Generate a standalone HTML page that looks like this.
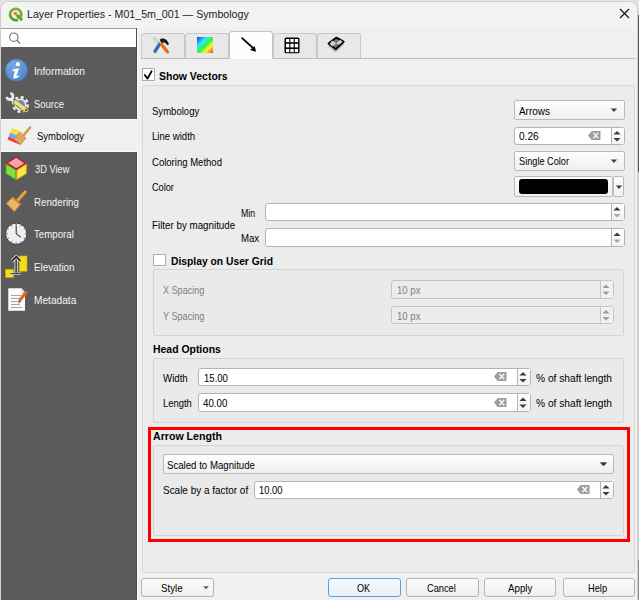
<!DOCTYPE html>
<html><head><meta charset="utf-8"><style>
*{margin:0;padding:0;box-sizing:border-box}
html,body{width:639px;height:600px;overflow:hidden;background:#e4e4e4}
body{position:relative;font-family:"Liberation Sans",sans-serif;font-size:10px;color:#000}
.a{position:absolute}
.t{position:absolute;white-space:nowrap;line-height:1}
</style></head><body>
<div class="a" style="left:638px;top:15px;width:1px;height:157px;background:#4a5866"></div>
<div class="a" style="left:638px;top:172px;width:1px;height:388px;background:#cdcdcd"></div>
<div class="a" style="left:638px;top:560px;width:1px;height:40px;background:#8a8a8a"></div>
<div class="a" style="left:0px;top:1px;width:638px;height:599px;background:#f0f0f0;border:1px solid #cfcfcf;border-bottom:none;border-radius:8px 8px 0 0"></div>
<div class="a" style="left:1px;top:2px;width:636px;height:26px;background:#f3f3f3;border-radius:7px 7px 0 0"></div>
<svg class="a" style="left:6px;top:4px" width="20" height="20" viewBox="0 0 20 20">
  <defs><linearGradient id="qg" x1="0" y1="0" x2="0" y2="1"><stop offset="0" stop-color="#80b62c"/><stop offset="1" stop-color="#5a9c22"/></linearGradient></defs>
  <path d="M11.8 15.6 A5.6 5.6 0 1 1 14.8 12.6" fill="none" stroke="url(#qg)" stroke-width="2.8"/>
  <path d="M11.6 11.8 L15.2 15.2" stroke="#5fa323" stroke-width="3" stroke-linecap="round"/>
  <circle cx="9.4" cy="9.6" r="1.8" fill="#f07a26"/>
</svg>
<div class="t" style="left:27.00px;top:9.29px;font-size:11px;color:#1b1b1b;transform:scaleX(0.9673);transform-origin:0 0;">Layer Properties - M01_5m_001 — Symbology</div>
<svg class="a" style="left:619px;top:8px" width="11" height="11" viewBox="0 0 11 11"><path d="M1 1L10 10M10 1L1 10" stroke="#1a1a1a" stroke-width="1.25"/></svg>
<div class="a" style="left:1px;top:28px;width:136px;height:19px;background:#fff;border-top:1px solid #9c9c9c"></div>
<svg class="a" style="left:8px;top:31px" width="14" height="14" viewBox="0 0 14 14"><circle cx="5.8" cy="6.2" r="4.2" fill="none" stroke="#707070" stroke-width="1.1"/><path d="M8.8 9.2L12.2 12.6" stroke="#707070" stroke-width="1.3"/></svg>
<div class="a" style="left:1px;top:47px;width:136px;height:553px;background:#5b5b5b"></div>
<div class="a" style="left:136px;top:28px;width:1px;height:572px;background:#4c4c4c"></div>
<div class="a" style="left:137px;top:28px;width:1px;height:572px;background:#fbfbfb"></div>
<div class="a" style="left:1px;top:119px;width:137px;height:33px;background:#f0f0f0;border-top:1px solid #fafafa;border-bottom:1px solid #fafafa"></div>
<div class="t" style="left:34.00px;top:65.86px;font-size:10.8px;color:#f4f4f4;transform:scaleX(0.9444);transform-origin:0 0;">Information</div>
<div class="t" style="left:34.00px;top:98.86px;font-size:10.8px;color:#f4f4f4;transform:scaleX(0.8763);transform-origin:0 0;">Source</div>
<div class="t" style="left:36.60px;top:130.86px;font-size:10.8px;color:#000;transform:scaleX(0.8792);transform-origin:0 0;">Symbology</div>
<div class="t" style="left:34.60px;top:163.86px;font-size:10.8px;color:#f4f4f4;transform:scaleX(0.8585);transform-origin:0 0;">3D View</div>
<div class="t" style="left:33.50px;top:196.86px;font-size:10.8px;color:#f4f4f4;transform:scaleX(0.9018);transform-origin:0 0;">Rendering</div>
<div class="t" style="left:34.20px;top:229.36px;font-size:10.8px;color:#f4f4f4;transform:scaleX(0.8966);transform-origin:0 0;">Temporal</div>
<div class="t" style="left:33.50px;top:261.96px;font-size:10.8px;color:#f4f4f4;transform:scaleX(0.9124);transform-origin:0 0;">Elevation</div>
<div class="t" style="left:33.50px;top:294.86px;font-size:10.8px;color:#f4f4f4;transform:scaleX(0.9392);transform-origin:0 0;">Metadata</div>
<div class="a" style="left:141px;top:58px;width:494px;height:1px;background:#bcbcbc"></div>
<div class="a" style="left:141px;top:33px;width:44px;height:25px;background:#e8e8e8;border:1px solid #c8c8c8;border-bottom:none;border-radius:3px 3px 0 0"></div>
<div class="a" style="left:185px;top:33px;width:44px;height:25px;background:#e8e8e8;border:1px solid #c8c8c8;border-bottom:none;border-radius:3px 3px 0 0"></div>
<div class="a" style="left:229px;top:31px;width:44px;height:28px;background:#fefefe;border:1px solid #c4c4c4;border-bottom:none;border-radius:3px 3px 0 0"></div>
<div class="a" style="left:273px;top:33px;width:44px;height:25px;background:#e8e8e8;border:1px solid #c8c8c8;border-bottom:none;border-radius:3px 3px 0 0"></div>
<div class="a" style="left:317px;top:33px;width:44px;height:25px;background:#e8e8e8;border:1px solid #c8c8c8;border-bottom:none;border-radius:3px 3px 0 0"></div>
<div class="a" style="left:142px;top:68px;width:13px;height:13px;background:#fff;border:1px solid #adadad"></div>
<svg class="a" style="left:142px;top:68px" width="13" height="13" viewBox="0 0 13 13"><path d="M2.8 7 L5.5 10.6 L9.6 3.2" fill="none" stroke="#000" stroke-width="1.8" stroke-linecap="round" stroke-linejoin="round"/></svg>
<div class="t" style="left:159.30px;top:70.99px;font-size:11px;color:#000;font-weight:bold;transform:scaleX(0.9521);transform-origin:0 0;">Show Vectors</div>
<div class="a" style="left:142px;top:85px;width:493px;height:488px;background:#ececec;border:1px solid #d7d7d7;border-radius:2px"></div>
<div class="t" style="left:151.60px;top:105.63px;font-size:10.6px;color:#000;transform:scaleX(0.9015);transform-origin:0 0;">Symbology</div>
<div class="a" style="left:514px;top:100px;width:111px;height:20px;background:linear-gradient(#fdfdfd,#f0f0f0);border:1px solid #bababa;border-radius:2px"></div>
<svg class="a" style="left:610px;top:107.5px" width="8" height="5" viewBox="0 0 8 5"><path d="M0.9 0.6 L7.1 0.6 L4 3.9 Z" fill="#3c3c3c"/></svg>
<div class="t" style="left:518.50px;top:105.53px;font-size:10.6px;color:#000;transform:scaleX(0.9373);transform-origin:0 0;">Arrows</div>
<div class="t" style="left:151.60px;top:131.03px;font-size:10.6px;color:#000;transform:scaleX(0.9057);transform-origin:0 0;">Line width</div>
<div class="a" style="left:514px;top:127px;width:111px;height:18px;background:#ffffff;border:1px solid #b4b4b4;border-radius:3px"></div>
<div class="a" style="left:612px;top:128px;width:12px;height:16px;background:linear-gradient(#fefefe,#f4f4f4)"></div>
<div class="a" style="left:611px;top:128px;width:1px;height:16px;background:#b4b4b4"></div>
<svg class="a" style="left:613.2px;top:127px" width="8" height="18" viewBox="0 0 8 18"><path d="M0.4 7.4 L4 4.1000000000000005 L7.6 7.4 Z" fill="#3c3c3c"/><path d="M0.4 11.100000000000001 L4 14.4 L7.6 11.100000000000001 Z" fill="#3c3c3c"/></svg>
<svg class="a" style="left:588px;top:131.0px" width="13" height="9" viewBox="0 0 13 9"><path d="M0 4.5 L3.6 0 L12.5 0 L12.5 9 L3.6 9 Z" fill="#9e9e9e"/><path d="M5.4 1.8 L10.2 7.2 M10.2 1.8 L5.4 7.2" stroke="#f6f6f6" stroke-width="1.4"/></svg>
<div class="t" style="left:518.50px;top:130.73px;font-size:10.6px;color:#000;transform:scaleX(0.9531);transform-origin:0 0;">0.26</div>
<div class="t" style="left:151.60px;top:156.63px;font-size:10.6px;color:#000;transform:scaleX(0.8997);transform-origin:0 0;">Coloring Method</div>
<div class="a" style="left:514px;top:151px;width:111px;height:20px;background:linear-gradient(#fdfdfd,#f0f0f0);border:1px solid #bababa;border-radius:2px"></div>
<svg class="a" style="left:610px;top:158.5px" width="8" height="5" viewBox="0 0 8 5"><path d="M0.9 0.6 L7.1 0.6 L4 3.9 Z" fill="#3c3c3c"/></svg>
<div class="t" style="left:518.50px;top:156.23px;font-size:10.6px;color:#000;transform:scaleX(0.8672);transform-origin:0 0;">Single Color</div>
<div class="t" style="left:151.60px;top:182.33px;font-size:10.6px;color:#000;transform:scaleX(0.8645);transform-origin:0 0;">Color</div>
<div class="a" style="left:514px;top:176px;width:99px;height:21px;background:linear-gradient(#fdfdfd,#f0f0f0);border:1px solid #bababa;border-radius:2px"></div>
<div class="a" style="left:519px;top:179px;width:89px;height:15px;background:#000;border-radius:3px"></div>
<div class="a" style="left:613px;top:176px;width:11px;height:21px;background:linear-gradient(#fdfdfd,#f0f0f0);border:1px solid #bababa;border-radius:2px"></div>
<svg class="a" style="left:614.5px;top:184.5px" width="8" height="5" viewBox="0 0 8 5"><path d="M0.9 0.6 L7.1 0.6 L4 3.9 Z" fill="#3c3c3c"/></svg>
<div class="t" style="left:151.60px;top:220.23px;font-size:10.6px;color:#000;transform:scaleX(0.9234);transform-origin:0 0;">Filter by magnitude</div>
<div class="t" style="left:240.80px;top:207.63px;font-size:10.6px;color:#000;transform:scaleX(0.8262);transform-origin:0 0;">Min</div>
<div class="t" style="left:240.80px;top:233.03px;font-size:10.6px;color:#000;transform:scaleX(0.9085);transform-origin:0 0;">Max</div>
<div class="a" style="left:265px;top:203px;width:360px;height:18px;background:#ffffff;border:1px solid #b4b4b4;border-radius:3px"></div>
<div class="a" style="left:612px;top:204px;width:12px;height:16px;background:linear-gradient(#fefefe,#f4f4f4)"></div>
<div class="a" style="left:611px;top:204px;width:1px;height:16px;background:#b4b4b4"></div>
<svg class="a" style="left:613.2px;top:203px" width="8" height="18" viewBox="0 0 8 18"><path d="M0.4 7.4 L4 4.1000000000000005 L7.6 7.4 Z" fill="#3c3c3c"/><path d="M0.4 11.100000000000001 L4 14.4 L7.6 11.100000000000001 Z" fill="#a8a8a8"/></svg>
<div class="a" style="left:265px;top:228px;width:360px;height:19px;background:#ffffff;border:1px solid #b4b4b4;border-radius:3px"></div>
<div class="a" style="left:612px;top:229px;width:12px;height:17px;background:linear-gradient(#fefefe,#f4f4f4)"></div>
<div class="a" style="left:611px;top:229px;width:1px;height:17px;background:#b4b4b4"></div>
<svg class="a" style="left:613.2px;top:228px" width="8" height="19" viewBox="0 0 8 19"><path d="M0.4 7.9 L4 4.6000000000000005 L7.6 7.9 Z" fill="#3c3c3c"/><path d="M0.4 11.600000000000001 L4 14.9 L7.6 11.600000000000001 Z" fill="#a8a8a8"/></svg>
<div class="a" style="left:153px;top:254px;width:13px;height:12px;background:#fff;border:1px solid #adadad"></div>
<div class="t" style="left:170.80px;top:255.59px;font-size:11px;color:#000;font-weight:bold;transform:scaleX(0.9367);transform-origin:0 0;">Display on User Grid</div>
<div class="a" style="left:153px;top:269px;width:471px;height:67px;background:#eaeaea;border:1px solid #d5d5d5;border-radius:2px"></div>
<div class="t" style="left:162.70px;top:284.83px;font-size:10.6px;color:#7e7e7e;transform:scaleX(0.8565);transform-origin:0 0;">X Spacing</div>
<div class="t" style="left:162.70px;top:310.73px;font-size:10.6px;color:#7e7e7e;transform:scaleX(0.8603);transform-origin:0 0;">Y Spacing</div>
<div class="a" style="left:391px;top:280px;width:223px;height:19px;background:#ececec;border:1px solid #c4c4c4;border-radius:3px"></div>
<div class="a" style="left:601px;top:281px;width:12px;height:17px;background:#f1f1f1"></div>
<div class="a" style="left:600px;top:281px;width:1px;height:17px;background:#c4c4c4"></div>
<svg class="a" style="left:602.2px;top:280px" width="8" height="19" viewBox="0 0 8 19"><path d="M0.4 7.9 L4 4.6000000000000005 L7.6 7.9 Z" fill="#9c9c9c"/><path d="M0.4 11.600000000000001 L4 14.9 L7.6 11.600000000000001 Z" fill="#9c9c9c"/></svg>
<div class="a" style="left:391px;top:306px;width:223px;height:18px;background:#ececec;border:1px solid #c4c4c4;border-radius:3px"></div>
<div class="a" style="left:601px;top:307px;width:12px;height:16px;background:#f1f1f1"></div>
<div class="a" style="left:600px;top:307px;width:1px;height:16px;background:#c4c4c4"></div>
<svg class="a" style="left:602.2px;top:306px" width="8" height="18" viewBox="0 0 8 18"><path d="M0.4 7.4 L4 4.1000000000000005 L7.6 7.4 Z" fill="#9c9c9c"/><path d="M0.4 11.100000000000001 L4 14.4 L7.6 11.100000000000001 Z" fill="#9c9c9c"/></svg>
<div class="t" style="left:396.50px;top:285.03px;font-size:10.6px;color:#7e7e7e;transform:scaleX(0.9049);transform-origin:0 0;">10 px</div>
<div class="t" style="left:396.50px;top:310.53px;font-size:10.6px;color:#7e7e7e;transform:scaleX(0.9049);transform-origin:0 0;">10 px</div>
<div class="t" style="left:153.10px;top:344.19px;font-size:11px;color:#000;font-weight:bold;transform:scaleX(0.9483);transform-origin:0 0;">Head Options</div>
<div class="a" style="left:153px;top:358px;width:471px;height:65px;background:#eaeaea;border:1px solid #d5d5d5;border-radius:2px"></div>
<div class="t" style="left:162.80px;top:372.53px;font-size:10.6px;color:#000;transform:scaleX(0.9139);transform-origin:0 0;">Width</div>
<div class="t" style="left:162.80px;top:397.73px;font-size:10.6px;color:#000;transform:scaleX(0.8910);transform-origin:0 0;">Length</div>
<div class="a" style="left:198px;top:368px;width:333px;height:18px;background:#ffffff;border:1px solid #b4b4b4;border-radius:3px"></div>
<div class="a" style="left:518px;top:369px;width:12px;height:16px;background:linear-gradient(#fefefe,#f4f4f4)"></div>
<div class="a" style="left:517px;top:369px;width:1px;height:16px;background:#b4b4b4"></div>
<svg class="a" style="left:519.2px;top:368px" width="8" height="18" viewBox="0 0 8 18"><path d="M0.4 7.4 L4 4.1000000000000005 L7.6 7.4 Z" fill="#3c3c3c"/><path d="M0.4 11.100000000000001 L4 14.4 L7.6 11.100000000000001 Z" fill="#3c3c3c"/></svg>
<svg class="a" style="left:494px;top:372.0px" width="13" height="9" viewBox="0 0 13 9"><path d="M0 4.5 L3.6 0 L12.5 0 L12.5 9 L3.6 9 Z" fill="#9e9e9e"/><path d="M5.4 1.8 L10.2 7.2 M10.2 1.8 L5.4 7.2" stroke="#f6f6f6" stroke-width="1.4"/></svg>
<div class="a" style="left:198px;top:393px;width:333px;height:19px;background:#ffffff;border:1px solid #b4b4b4;border-radius:3px"></div>
<div class="a" style="left:518px;top:394px;width:12px;height:17px;background:linear-gradient(#fefefe,#f4f4f4)"></div>
<div class="a" style="left:517px;top:394px;width:1px;height:17px;background:#b4b4b4"></div>
<svg class="a" style="left:519.2px;top:393px" width="8" height="19" viewBox="0 0 8 19"><path d="M0.4 7.9 L4 4.6000000000000005 L7.6 7.9 Z" fill="#3c3c3c"/><path d="M0.4 11.600000000000001 L4 14.9 L7.6 11.600000000000001 Z" fill="#3c3c3c"/></svg>
<svg class="a" style="left:494px;top:397.5px" width="13" height="9" viewBox="0 0 13 9"><path d="M0 4.5 L3.6 0 L12.5 0 L12.5 9 L3.6 9 Z" fill="#9e9e9e"/><path d="M5.4 1.8 L10.2 7.2 M10.2 1.8 L5.4 7.2" stroke="#f6f6f6" stroke-width="1.4"/></svg>
<div class="t" style="left:203.50px;top:372.53px;font-size:10.6px;color:#000;transform:scaleX(0.9019);transform-origin:0 0;">15.00</div>
<div class="t" style="left:203.10px;top:397.73px;font-size:10.6px;color:#000;transform:scaleX(0.9170);transform-origin:0 0;">40.00</div>
<div class="t" style="left:536.30px;top:372.63px;font-size:10.6px;color:#000;transform:scaleX(0.9624);transform-origin:0 0;">% of shaft length</div>
<div class="t" style="left:536.30px;top:397.83px;font-size:10.6px;color:#000;transform:scaleX(0.9624);transform-origin:0 0;">% of shaft length</div>
<div class="t" style="left:153.10px;top:431.29px;font-size:11px;color:#000;font-weight:bold;transform:scaleX(0.9636);transform-origin:0 0;">Arrow Length</div>
<div class="a" style="left:153px;top:445px;width:471px;height:91px;background:#eaeaea;border:1px solid #d5d5d5;border-radius:2px"></div>
<div class="a" style="left:163px;top:454px;width:451px;height:20px;background:linear-gradient(#fdfdfd,#f0f0f0);border:1px solid #bababa;border-radius:2px"></div>
<svg class="a" style="left:599px;top:461.5px" width="8" height="5" viewBox="0 0 8 5"><path d="M0.9 0.6 L7.1 0.6 L4 3.9 Z" fill="#3c3c3c"/></svg>
<div class="t" style="left:166.90px;top:459.63px;font-size:10.6px;color:#000;transform:scaleX(0.9103);transform-origin:0 0;">Scaled to Magnitude</div>
<svg class="a" style="left:599.5px;top:462.0px" width="8" height="5" viewBox="0 0 8 5"><path d="M0.9 0.6 L7.1 0.6 L4 3.9 Z" fill="#3c3c3c"/></svg>
<div class="t" style="left:162.90px;top:485.43px;font-size:10.6px;color:#000;transform:scaleX(0.9390);transform-origin:0 0;">Scale by a factor of</div>
<div class="a" style="left:254px;top:481px;width:360px;height:18px;background:#ffffff;border:1px solid #b4b4b4;border-radius:3px"></div>
<div class="a" style="left:601px;top:482px;width:12px;height:16px;background:linear-gradient(#fefefe,#f4f4f4)"></div>
<div class="a" style="left:600px;top:482px;width:1px;height:16px;background:#b4b4b4"></div>
<svg class="a" style="left:602.2px;top:481px" width="8" height="18" viewBox="0 0 8 18"><path d="M0.4 7.4 L4 4.1000000000000005 L7.6 7.4 Z" fill="#3c3c3c"/><path d="M0.4 11.100000000000001 L4 14.4 L7.6 11.100000000000001 Z" fill="#3c3c3c"/></svg>
<svg class="a" style="left:577px;top:485.0px" width="13" height="9" viewBox="0 0 13 9"><path d="M0 4.5 L3.6 0 L12.5 0 L12.5 9 L3.6 9 Z" fill="#9e9e9e"/><path d="M5.4 1.8 L10.2 7.2 M10.2 1.8 L5.4 7.2" stroke="#f6f6f6" stroke-width="1.4"/></svg>
<div class="t" style="left:259.20px;top:485.43px;font-size:10.6px;color:#000;transform:scaleX(0.8830);transform-origin:0 0;">10.00</div>
<div class="a" style="left:148px;top:427px;width:482px;height:115px;border:3px solid #ff0000"></div>
<div class="a" style="left:141px;top:578px;width:73px;height:19px;background:linear-gradient(#fcfcfc,#eeeeee);border:1px solid #b4b4b4;border-radius:3px"></div>
<div class="t" style="left:160.60px;top:582.83px;font-size:10.6px;color:#000;transform:scaleX(0.9179);transform-origin:0 0;">Style</div>
<svg class="a" style="left:203.4px;top:585.6px" width="6" height="4" viewBox="0 0 6 4"><path d="M0.2 0.3 L5.8 0.3 L3 3.3 Z" fill="#5a5a5a"/></svg>
<div class="a" style="left:328px;top:578px;width:73px;height:19px;background:linear-gradient(#f5f9fd,#e9f1f9);border:1px solid #56a0e4;border-radius:3px"></div>
<div class="a" style="left:406px;top:578px;width:73px;height:19px;background:linear-gradient(#fcfcfc,#eeeeee);border:1px solid #b4b4b4;border-radius:3px"></div>
<div class="a" style="left:484px;top:578px;width:72px;height:19px;background:linear-gradient(#fcfcfc,#eeeeee);border:1px solid #b4b4b4;border-radius:3px"></div>
<div class="a" style="left:563px;top:578px;width:72px;height:19px;background:linear-gradient(#fcfcfc,#eeeeee);border:1px solid #b4b4b4;border-radius:3px"></div>
<div class="t" style="left:357.30px;top:583.03px;font-size:10.6px;color:#000;transform:scaleX(0.8582);transform-origin:0 0;">OK</div>
<div class="t" style="left:427.30px;top:583.03px;font-size:10.6px;color:#000;transform:scaleX(0.8706);transform-origin:0 0;">Cancel</div>
<div class="t" style="left:507.50px;top:583.03px;font-size:10.6px;color:#000;transform:scaleX(0.9208);transform-origin:0 0;">Apply</div>
<div class="t" style="left:588.30px;top:583.03px;font-size:10.6px;color:#000;transform:scaleX(0.8747);transform-origin:0 0;">Help</div>
<!-- sidebar icons -->
<svg class="a" style="left:2px;top:56px" width="30" height="30" viewBox="0 0 30 30">
  <defs><radialGradient id="ig" cx="0.4" cy="0.35" r="0.75"><stop offset="0" stop-color="#78a8e4"/><stop offset="1" stop-color="#4d82c6"/></radialGradient></defs>
  <circle cx="14.4" cy="14.1" r="11.2" fill="url(#ig)" stroke="#4072b4" stroke-width="0.7"/>
  <path d="M6 12 A8.6 8.6 0 0 1 13 5.6" fill="none" stroke="#9cc0ec" stroke-width="0.9" opacity="0.8"/>
  <circle cx="15.9" cy="8.2" r="2.1" fill="#fff"/>
  <path d="M10.8 13.6 L17.2 12.2 L14.6 19.6 C14.3 20.6 15 20.8 16.8 19 L17.2 20.2 C15 22.6 10.4 23.6 11.4 20.2 L13.2 15 L10.6 15.4 Z" fill="#fff"/>
</svg>
<svg class="a" style="left:2px;top:89px" width="30" height="30" viewBox="0 0 30 30">
  <path d="M8.6 10 L13.5 14.5" stroke="#e4e4e4" stroke-width="2.6" stroke-linecap="round"/>
  <path d="M8.3 4.4 A3.1 3.1 0 1 1 4.8 7.8" fill="none" stroke="#ececec" stroke-width="2.6"/>
  <circle cx="18.5" cy="15.5" r="7.3" fill="none" stroke="#f0f0f0" stroke-width="2.4" stroke-dasharray="3 2.73"/>
  <circle cx="18.5" cy="15.5" r="6" fill="#f0f0f0"/>
  <circle cx="18.5" cy="15.5" r="4.4" fill="#5a92d8"/>
  <path d="M13.6 13.2 L24.3 21.2" stroke="#8a7a30" stroke-width="5" stroke-linecap="round"/>
  <path d="M13.6 13.2 L24.3 21.2" stroke="#f0dc78" stroke-width="3.6" stroke-linecap="round"/>
  <circle cx="24.2" cy="21.1" r="1.1" fill="#2a3040"/>
</svg>
<svg class="a" style="left:4px;top:121px" width="30" height="30" viewBox="0 0 30 30">
  <path d="M8 7 L19 11 L17 16 L6 11.5 Z" fill="#f4e24a"/>
  <path d="M6 11.5 L17 16 L14.5 21 L4.8 15.5 Z" fill="#7ea6dc"/>
  <path d="M4.8 15.5 L14.5 21 L16 23.8 L3.5 18.5 Z" fill="#ee3b3b"/>
  <path d="M19.5 14.5 L26 6.5" stroke="#d89a4a" stroke-width="2.6" stroke-linecap="round"/>
  <path d="M10 18 L15.5 11.5 L22 17 L16.5 23.5 Z" fill="#dba866" stroke="#c2843a" stroke-width="0.8"/>
</svg>
<svg class="a" style="left:2px;top:154px" width="30" height="30" viewBox="0 0 30 30">
  <path d="M14.25 3 L23.5 9.25 L14.25 15 L5 9 Z" fill="#f4a4a4" stroke="#c41414" stroke-width="1.4" stroke-linejoin="round"/>
  <path d="M4.2 10.2 L13.8 16.2 L13.8 25.5 L4 19.5 Z" fill="#86e040" stroke="#58b020" stroke-width="1"/>
  <path d="M14.8 16.2 L24.3 10.2 L24.3 19.5 L14.8 25.5 Z" fill="#ffe44a" stroke="#d4aa10" stroke-width="1"/>
</svg>
<svg class="a" style="left:2px;top:187px" width="30" height="30" viewBox="0 0 30 30">
  <path d="M23.2 5 L16 13" stroke="#e6a23a" stroke-width="3.2" stroke-linecap="round"/>
  <path d="M4.5 16.5 L10.5 10.3 L18.5 17.3 L12.3 24.5 Z" fill="#e8b468" stroke="#d08c30" stroke-width="1"/>
  <path d="M10.5 10.3 L18.5 17.3" stroke="#c98428" stroke-width="1.6"/>
</svg>
<svg class="a" style="left:2px;top:220px" width="30" height="30" viewBox="0 0 30 30">
  <circle cx="14.25" cy="13.75" r="10.7" fill="#efefef" stroke="#383838" stroke-width="1"/>
  <g fill="#4a7ac4">
  <circle cx="14.25" cy="4.5" r="0.8"/><circle cx="14.25" cy="23" r="0.8"/><circle cx="5" cy="13.75" r="0.8"/><circle cx="23.5" cy="13.75" r="0.8"/>
  <circle cx="18.9" cy="5.7" r="0.7"/><circle cx="22.3" cy="9.1" r="0.7"/><circle cx="22.3" cy="18.4" r="0.7"/><circle cx="18.9" cy="21.8" r="0.7"/>
  <circle cx="9.6" cy="5.7" r="0.7"/><circle cx="6.2" cy="9.1" r="0.7"/><circle cx="6.2" cy="18.4" r="0.7"/><circle cx="9.6" cy="21.8" r="0.7"/>
  </g>
  <path d="M14.25 5.5 L14.25 13.75 L18.8 17.3" fill="none" stroke="#555" stroke-width="1.3"/>
</svg>
<svg class="a" style="left:2px;top:252px" width="30" height="30" viewBox="0 0 30 30">
  <rect x="17.25" y="4" width="7.75" height="15.25" fill="#f4dc1c" stroke="#c9a800" stroke-width="0.6"/>
  <rect x="3.5" y="17.25" width="8.25" height="8.25" fill="#f4dc1c" stroke="#c9a800" stroke-width="0.6"/>
  <path d="M8.5 21.6 L19.2 21.6" stroke="#cfcfcf" stroke-width="2.4"/>
  <path d="M8.5 21.6 L19.2 21.6" stroke="#3a3a3a" stroke-width="1"/>
  <path d="M14.25 20.8 L14.25 6" stroke="#d8d8d8" stroke-width="3.6"/>
  <path d="M14.25 20.8 L14.25 6" stroke="#4a4a4a" stroke-width="1.8"/>
  <path d="M10 9 L14.25 4.6 L18.5 9" fill="none" stroke="#d8d8d8" stroke-width="3.4" stroke-linejoin="round"/><path d="M10 9 L14.25 4.6 L18.5 9" fill="none" stroke="#1a1a1a" stroke-width="1.7" stroke-linejoin="miter"/>
</svg>
<svg class="a" style="left:2px;top:285px" width="30" height="30" viewBox="0 0 30 30">
  <path d="M6.25 3.25 L19.5 3.25 L23 7 L23 25.75 L6.25 25.75 Z" fill="#fafafa"/>
  <path d="M19.5 3.25 L19.5 7.5 L23 7.5" fill="#dcdcdc"/>
  <g stroke="#9a9a9a" stroke-width="0.9"><path d="M9 10.5H19M9 13.5H19M9 16.5H18M9 19.5H18M9 22.5H20"/></g>
  <path d="M24.5 6.5 L17.5 15.8" stroke="#e8661e" stroke-width="3.2"/>
  <path d="M17 15.2 L16.5 19 L18.8 16.6 Z" fill="#555"/>
</svg>
<!-- tab icons -->
<svg class="a" style="left:148px;top:33px" width="30" height="25" viewBox="0 0 30 25">
  <path d="M5.6 4.6 L11.6 10.8" stroke="#bdbdbd" stroke-width="2.4"/>
  <path d="M5.6 4.6 L11.6 10.8" stroke="#e2e2e2" stroke-width="1.2"/>
  <path d="M11.4 11.4 L7 18.4" stroke="#3b6cb2" stroke-width="3.4" stroke-linecap="round"/>
  <path d="M13.8 11.8 L19.4 18.8" stroke="#ee6a10" stroke-width="3.4" stroke-linecap="round"/>
  <path d="M11.6 6.6 C13.8 4.6 18.6 4.4 21 11.2 L19.2 12.2 C17.6 9.2 15.6 8.6 13.6 10.4 Z" fill="#1c1c1c"/>
</svg>
<div class="a" style="left:197px;top:37px;width:16px;height:16px;background:linear-gradient(135deg,#2030f0 0%,#30f0f0 33%,#30f040 52%,#f8f830 72%,#f04020 100%)"></div>
<svg class="a" style="left:236px;top:32px" width="30" height="26" viewBox="0 0 30 26">
  <path d="M6.1 6.1 L16.5 15.5" stroke="#000" stroke-width="1.7" stroke-linecap="round"/>
  <path d="M14 18.1 L18.8 14.1 L20 19.7 Z" fill="#000"/>
</svg>
<svg class="a" style="left:284px;top:37px" width="16" height="17" viewBox="0 0 16 17">
  <rect x="0.5" y="0.5" width="15" height="15.8" rx="1.5" fill="#000"/>
  <g fill="#fff"><rect x="2" y="2" width="3.3" height="3.2"/><rect x="6.4" y="2" width="3.3" height="3.2"/><rect x="10.8" y="2" width="3.3" height="3.2"/>
  <rect x="2" y="6.8" width="3.3" height="3.6"/><rect x="6.4" y="6.8" width="3.3" height="3.6"/><rect x="10.8" y="6.8" width="3.3" height="3.6"/>
  <rect x="2" y="12" width="3.3" height="3.2"/><rect x="6.4" y="12" width="3.3" height="3.2"/><rect x="10.8" y="12" width="3.3" height="3.2"/></g>
</svg>
<svg class="a" style="left:320px;top:33px" width="30" height="25" viewBox="0 0 30 25">
  <path d="M8.4 12.6 L15.7 18.4 L23.5 11" fill="none" stroke="#b8b8b8" stroke-width="2" opacity="0.8"/>
  <path d="M16.4 4.6 L23.6 8.7 L15.7 16.2 L8.5 10.6 Z" fill="#777" stroke="#000" stroke-width="1.9" stroke-linejoin="round"/>
  <path d="M12.3 7.6 L16.1 10.4 L12.4 13.4 L9.6 10.8Z M20.2 6.8 L22.6 8.8 L19.6 11.6 L16.1 10.4Z" fill="#cfcfcf"/>
</svg>
</body></html>
